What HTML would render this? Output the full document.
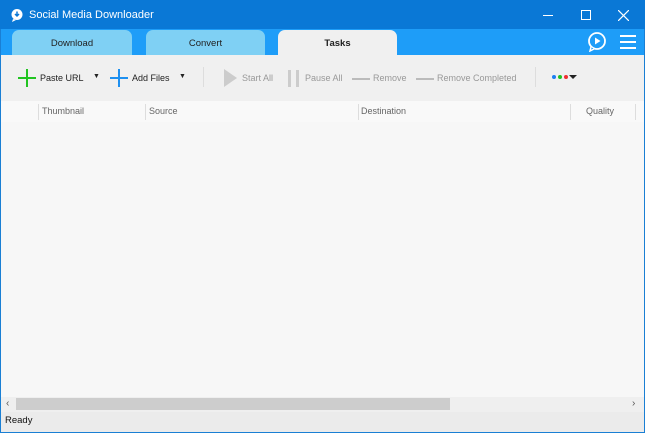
<html><head><style>
*{margin:0;padding:0;box-sizing:border-box}
body{width:645px;height:433px;font-family:"Liberation Sans",sans-serif;font-size:11px;background:#fff;position:relative;overflow:hidden}
.win{position:absolute;left:0;top:0;width:645px;height:433px;border:1px solid #1a7fd4;border-top:none}
.title{position:absolute;left:0;top:0;width:645px;height:29px;background:#0a78d6;color:#fff;font-size:11px}
.tabbar{position:absolute;left:1px;top:29px;width:643px;height:26px;background:#1e9df8}
.tab{position:absolute;top:1px;height:25px;border-radius:7px 7px 0 0;text-align:center;line-height:27px;font-size:9.5px;color:#222}
.tool{position:absolute;left:1px;top:55px;width:643px;height:46px;background:#f0f0f0}
.a{position:absolute;font-size:9px;color:#222}
.g{color:#999}
.hdr{position:absolute;left:1px;top:101px;width:643px;height:21px;background:#f9f9f9}
.h{position:absolute;top:5px;font-size:9px;color:#666}
.sep{position:absolute;top:3px;width:1px;height:16px;background:#ddd}
.cont{position:absolute;left:1px;top:122px;width:643px;height:275px;background:#f7f7f7}
.sb{position:absolute;left:1px;top:397px;width:643px;height:15px;background:#efefef}
.st{position:absolute;left:1px;top:412px;width:643px;height:20px;background:#ebebeb;font-size:9.5px;line-height:18px;padding-left:4px;color:#111}
</style></head><body>
<div class="win"></div>
<div class="title">
<svg style="position:absolute;left:10px;top:8px" width="14" height="14"><circle cx="7" cy="6.5" r="5.5" fill="#fff"/><path d="M3 11 L2 14 L6 12z" fill="#fff"/><path d="M7 3.5v4M5 6l2 2 2-2" stroke="#0a78d6" stroke-width="1.5" fill="none"/></svg>
<span style="position:absolute;left:29px;top:9px">Social Media Downloader</span>
<div style="position:absolute;left:543px;top:15px;width:10px;height:1px;background:#fff"></div>
<div style="position:absolute;left:581px;top:10px;width:10px;height:10px;border:1px solid #fff"></div>
<svg style="position:absolute;left:618px;top:10px" width="11" height="11"><path d="M0 0L11 11M11 0L0 11" stroke="#fff" stroke-width="1.2"/></svg>
</div>
<div class="tabbar">
<div class="tab" style="left:11px;width:120px;background:#7fd0f4">Download</div>
<div class="tab" style="left:145px;width:119px;background:#7fd0f4">Convert</div>
<div class="tab" style="left:277px;width:119px;background:#f0f0f0;font-weight:bold">Tasks</div>
<svg style="position:absolute;left:586px;top:3px" width="20" height="20"><circle cx="10" cy="9" r="8" fill="none" stroke="#fff" stroke-width="1.8"/><path d="M8 5.5v7l5.5-3.5z" fill="#fff"/><path d="M4 15l-1 4 4-2" fill="#1e9df8" stroke="#fff" stroke-width="1.5"/></svg>
<div style="position:absolute;left:619px;top:6px;width:16px;height:2px;background:#fff;box-shadow:0 6px #fff,0 12px #fff"></div>
</div>
<div class="tool">
<svg style="position:absolute;left:17px;top:14px" width="18" height="18"><path d="M9 0v18M0 9h18" stroke="#22c422" stroke-width="2"/></svg>
<span class="a" style="left:39px;top:18px">Paste URL</span>
<span class="a" style="left:92px;top:18px;font-size:7px">▼</span>
<svg style="position:absolute;left:109px;top:14px" width="18" height="18"><path d="M9 0v18M0 9h18" stroke="#1e90f0" stroke-width="2"/></svg>
<span class="a" style="left:131px;top:18px">Add Files</span>
<span class="a" style="left:178px;top:18px;font-size:7px">▼</span>
<div style="position:absolute;left:202px;top:12px;width:1px;height:20px;background:#ddd"></div>
<svg style="position:absolute;left:223px;top:14px" width="14" height="18"><path d="M0 0v18l13-9z" fill="#ccc"/></svg>
<span class="a g" style="left:241px;top:18px">Start All</span>
<div style="position:absolute;left:287px;top:15px;width:3px;height:17px;background:#ccc"></div>
<div style="position:absolute;left:295px;top:15px;width:3px;height:17px;background:#ccc"></div>
<span class="a g" style="left:304px;top:18px">Pause All</span>
<div style="position:absolute;left:351px;top:23px;width:18px;height:2px;background:#bbb"></div>
<span class="a g" style="left:372px;top:18px">Remove</span>
<div style="position:absolute;left:415px;top:23px;width:18px;height:2px;background:#bbb"></div>
<span class="a g" style="left:436px;top:18px">Remove Completed</span>
<div style="position:absolute;left:534px;top:12px;width:1px;height:20px;background:#ddd"></div>
<svg style="position:absolute;left:551px;top:18px" width="30" height="8"><circle cx="2" cy="4" r="2" fill="#1e7ff0"/><circle cx="8" cy="4" r="2" fill="#22c422"/><circle cx="14" cy="4" r="2" fill="#f03030"/><path d="M17 2h8l-4 4z" fill="#222"/></svg>
</div>
<div class="hdr">
<div class="sep" style="left:37px"></div><span class="h" style="left:41px">Thumbnail</span>
<div class="sep" style="left:144px"></div><span class="h" style="left:148px">Source</span>
<div class="sep" style="left:357px"></div><span class="h" style="left:360px">Destination</span>
<div class="sep" style="left:569px"></div><span class="h" style="left:585px">Quality</span>
<div class="sep" style="left:634px"></div>
</div>
<div class="cont"></div>
<div class="sb"><span style="position:absolute;left:5px;top:1px;font-size:10px;color:#555">‹</span>
<div style="position:absolute;left:15px;top:1px;width:434px;height:12px;background:#cdcdcd"></div>
<span style="position:absolute;left:631px;top:1px;font-size:10px;color:#555">›</span></div>
<div class="st">Ready</div>
</body></html>
